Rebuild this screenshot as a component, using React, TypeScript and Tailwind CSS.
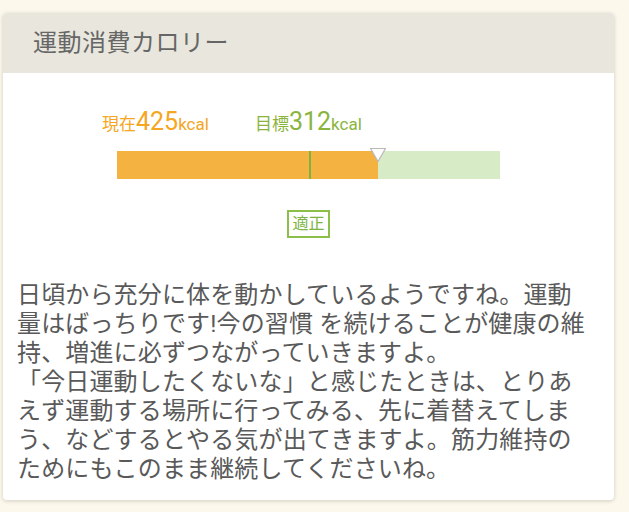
const current = 425;
const target = 312;
const max = target * 2;

const lines = [
  '日頃から充分に体を動かしているようですね。運動',
  '量はばっちりです!今の習慣 を続けることが健康の維',
  '持、増進に必ずつながっていきますよ。',
  '「今日運動したくないな」と感じたときは、とりあ',
  'えず運動する場所に行ってみる、先に着替えてしま',
  'う、などするとやる気が出てきますよ。筋力維持の',
  'ためにもこのまま継続してくださいね。',
];

function Gauge() {
  const fill = (current / max) * 100;
  const goal = (target / max) * 100;

  return (
    <div className="w-[383px] mx-auto">
      {/* Labels */}
      <div className="flex items-end gap-[46px] -ml-[15px] h-[28px]">
        <div className="text-[#f5a623] leading-none">
          <span className="text-[17px]">現在</span>
          <span className="text-[25px]">{current}</span>
          <span className="text-[17px]">kcal</span>
        </div>
        <div className="text-[#8ab43e] leading-none">
          <span className="text-[17px]">目標</span>
          <span className="text-[25px]">{target}</span>
          <span className="text-[17px]">kcal</span>
        </div>
      </div>

      {/* Bar */}
      <div className="relative mt-[17px] h-[28px] bg-[#d6ebc6]">
        <div className="absolute inset-y-0 left-0 bg-[#f4b240]" style={{ width: `${fill}%` }}></div>
        <div className="absolute inset-y-0 w-[2px] bg-[#7cb342]" style={{ left: `${goal}%` }}></div>
        <svg
          className="absolute -top-[4px] -ml-[9px]"
          style={{ left: `${fill}%` }}
          width="18"
          height="16"
          viewBox="0 0 18 16"
        >
          <path d="M1.5 1.5 L16.5 1.5 L9 14.5 Z" fill="#ffffff" stroke="#b8b8b8" strokeWidth="1.2" strokeLinejoin="round" />
        </svg>
      </div>
    </div>
  );
}

export default function App() {
  return (
    <div className="min-h-[512px] bg-[#fdf8ec] pt-[13px] pl-[3px] pb-[12px] font-['Roboto','Noto_Sans_CJK_JP',sans-serif]">
      <div className="w-[611px] bg-white rounded-[4px] shadow-[0_1px_4px_rgba(0,0,0,0.18)] overflow-hidden">
        {/* Header */}
        <div className="h-[60px] bg-[#e8e6dd] flex items-center pl-[30px]">
          <h2 className="text-[24px] text-[#666666] tracking-[0.5px]">運動消費カロリー</h2>
        </div>

        {/* Body */}
        <div className="pt-[33px] px-[14px] pb-[16px]">
          <Gauge />

          <div className="mt-[31px] mx-auto w-fit border-2 border-[#8cbf4a] text-[#7cb342] text-[16px] leading-[24px] px-[3px]">
            適正
          </div>

          <p className="mt-[43px] text-[24px] leading-[29px] text-[#595959] tracking-[0.15px] whitespace-nowrap">
            {lines.map((line, i) => (
              <span key={i} className="block">{line}</span>
            ))}
          </p>
        </div>
      </div>
    </div>
  );
}
